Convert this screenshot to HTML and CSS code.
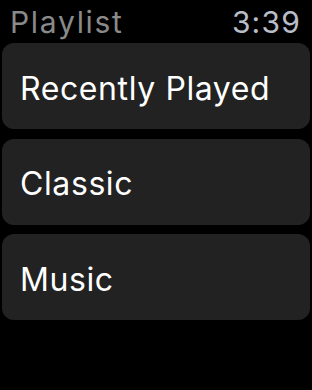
FILE: index.html
```html
<!DOCTYPE html>
<html>
<head>
<meta charset="utf-8">
<link rel="stylesheet" href="styles.css">
</head>
<body>
<div class="screen">
  <div class="header">
    <span class="title">Playlist</span>
    <span class="time">3:39</span>
  </div>
  <div class="list">
    <div class="card">Recently Played</div>
    <div class="card">Classic</div>
    <div class="card">Music</div>
  </div>
</div>
</body>
</html>
```
FILE: styles.css
```css
html, body {
  margin: 0;
  padding: 0;
  background: #000;
}
.screen {
  width: 312px;
  height: 390px;
  background: #000;
  font-family: "Inter", "Roboto", sans-serif;
}
.header {
  display: flex;
  justify-content: space-between;
  align-items: center;
  height: 43px;
  padding: 0 11px 0 10px;
  box-sizing: border-box;
}
.title {
  font-size: 30px;
  color: #8a8a8a;
  line-height: 1;
  letter-spacing: 1.7px;
}
.time {
  font-size: 30px;
  color: #b8bdc8;
  line-height: 1;
  letter-spacing: 1.2px;
}
.list {
  display: flex;
  flex-direction: column;
  gap: 9.5px;
  padding: 0 2px;
}
.card {
  height: 86px;
  box-sizing: border-box;
  padding-top: 4px;
  background: #222222;
  border-radius: 12px;
  color: #fff;
  font-size: 32px;
  display: flex;
  align-items: center;
  padding-left: 18px;
  letter-spacing: 0.6px;
}
```
